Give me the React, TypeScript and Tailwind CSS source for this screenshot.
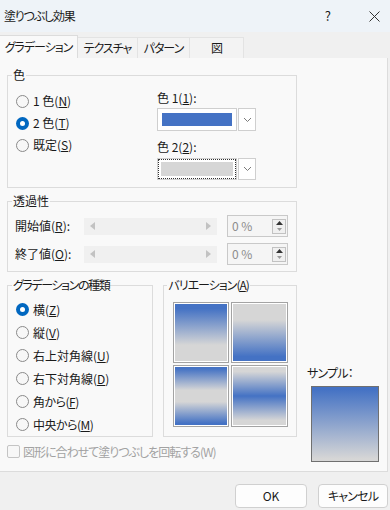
import React from "react";

const U = ({ c }: { c: string }) => <span className="underline">{c}</span>;

function Radio({ checked, label }: { checked?: boolean; label: React.ReactNode }) {
  return (
    <div className="flex h-[22px] items-center gap-[4px]">
      {checked ? (
        <span className="flex h-[13px] w-[13px] items-center justify-center rounded-full bg-[#0067c0]">
          <span className="h-[5px] w-[5px] rounded-full bg-white" />
        </span>
      ) : (
        <span className="h-[13px] w-[13px] rounded-full border border-[#8a8a8a] bg-[#f7f7f7]" />
      )}
      <span className="leading-[16px]">{label}</span>
    </div>
  );
}

function Chevron() {
  return (
    <svg width="9" height="6" viewBox="0 0 9 6">
      <path d="M1 1 L4.5 4.5 L8 1" fill="none" stroke="#7a7a7a" strokeWidth="1" />
    </svg>
  );
}

function Slider({ label }: { label: React.ReactNode }) {
  return (
    <div className="flex h-[28px] items-center">
      <span className="w-[69px] leading-[16px]">{label}</span>
      <div className="flex h-[17px] w-[133px] items-center justify-between bg-[#f0f0f0] px-[6px]">
        <svg width="5" height="8" viewBox="0 0 5 8">
          <path d="M5 0 L0 4 L5 8 Z" fill="#c2c2c2" />
        </svg>
        <svg width="5" height="8" viewBox="0 0 5 8">
          <path d="M0 0 L5 4 L0 8 Z" fill="#c2c2c2" />
        </svg>
      </div>
      <div className="ml-[10px] flex h-[22px] w-[61px] items-center justify-between border border-[#c9c9c9] bg-[#f5f5f5] pl-[4px] pr-[1px]">
        <span className="text-[#8c8c8c] leading-[16px]">0 %</span>
        <div className="flex h-[15px] w-[14px] flex-col border border-[#c2c2c2] bg-[#f0f0f0]">
          <div className="flex flex-1 items-center justify-center">
            <svg width="7" height="4" viewBox="0 0 7 4">
              <path d="M0 4 L3.5 0 L7 4 Z" fill="#333" />
            </svg>
          </div>
          <div className="flex flex-1 items-center justify-center">
            <svg width="5" height="3" viewBox="0 0 5 3">
              <path d="M0 0 L2.5 3 L5 0 Z" fill="#9a9a9a" />
            </svg>
          </div>
        </div>
      </div>
    </div>
  );
}

export default function App() {
  return (
    <div className="h-[510px] w-[390px] overflow-hidden bg-[#f0f0f0] font-['Noto_Sans_CJK_JP',sans-serif] text-[12px] text-[#1a1a1a] [font-feature-settings:'palt']">
      {/* Title bar */}
      <div className="flex h-[32px] items-center bg-[#eef3f8] pl-[4px]">
        <span className="text-[12px] leading-[16px] tracking-[-1.2px]">塗りつぶし効果</span>
        <span className="ml-auto mr-[38px] text-[13px] leading-[16px]">?</span>
        <svg className="mr-[10px]" width="11" height="11" viewBox="0 0 11 11">
          <path d="M0.5 0.5 L10.5 10.5 M10.5 0.5 L0.5 10.5" stroke="#333" strokeWidth="1" />
        </svg>
      </div>

      {/* Tabs */}
      <div className="flex h-[26px] items-end tracking-[-1px]">
        <div className="flex h-[23px] w-[78px] items-center justify-center border-r border-t border-[#dcdcdc] bg-[#f9f9f9]">
          グラデーション
        </div>
        <div className="flex h-[21px] w-[60px] items-center justify-center border-r border-t border-[#e3e3e3] bg-[#f3f3f3]">
          テクスチャ
        </div>
        <div className="flex h-[21px] w-[52px] items-center justify-center border-r border-t border-[#e3e3e3] bg-[#f3f3f3]">
          パターン
        </div>
        <div className="flex h-[21px] w-[54px] items-center justify-center border-r border-t border-[#e3e3e3] bg-[#f3f3f3]">
          図
        </div>
      </div>

      {/* Panel */}
      <div className="h-[414px] w-[388px] border-b border-r border-[#dcdcdc] bg-[#f9f9f9] pl-[7px] pt-[9px]">
        {/* 色 */}
        <fieldset className="w-[290px] border border-[#dcdcdc]">
          <legend className="ml-[4px] px-[1px] leading-[16px]">色</legend>
          <div className="flex h-[104px] pl-[8px] pt-[7px]">
            <div className="w-[141px]">
              <Radio label={<>1 色(<U c="N" />)</>} />
              <Radio checked label={<>2 色(<U c="T" />)</>} />
              <Radio label={<>既定(<U c="S" />)</>} />
            </div>
            <div className="flex flex-col">
              <span className="leading-[16px]">
                色 1(<U c="1" />):
              </span>
              <div className="mt-[2px] flex h-[23px] w-[99px]">
                <div className="flex-1 border border-[#cfcfcf] bg-white p-[4px]">
                  <div className="h-full w-full bg-[#4472c4]" />
                </div>
                <div className="ml-[1px] flex w-[18px] items-center justify-center border border-[#cfcfcf] bg-white">
                  <Chevron />
                </div>
              </div>
              <span className="mt-[8px] leading-[16px]">
                色 2(<U c="2" />):
              </span>
              <div className="mt-[3px] flex h-[22px] w-[99px]">
                <div className="flex-1 border border-[#cfcfcf] bg-white">
                  <div className="h-full w-full border border-dotted border-[#333] p-[2px]">
                    <div className="h-full w-full bg-[#d6d6d6]" />
                  </div>
                </div>
                <div className="ml-[1px] flex w-[18px] items-center justify-center border border-[#cfcfcf] bg-white">
                  <Chevron />
                </div>
              </div>
            </div>
          </div>
        </fieldset>

        {/* 透過性 */}
        <fieldset className="mt-[5px] w-[290px] border border-[#dcdcdc]">
          <legend className="ml-[4px] px-[1px] leading-[16px]">透過性</legend>
          <div className="h-[62px] pl-[7px] pt-[3px]">
            <Slider label={<>開始値(<U c="R" />):</>} />
            <Slider label={<>終了値(<U c="O" />):</>} />
          </div>
        </fieldset>

        <div className="mt-[5px] flex">
          <div className="w-[290px]">
            <div className="flex gap-[10px]">
              {/* 種類 */}
              <fieldset className="w-[147px] border border-[#dcdcdc]">
                <legend className="ml-[4px] px-[1px] leading-[16px] tracking-[-1.4px]">グラデーションの種類</legend>
                <div className="h-[143px] pl-[8px] pt-[5px]">
                  <div className="[&>div]:h-[23px]">
                    <Radio checked label={<>横(<U c="Z" />)</>} />
                    <Radio label={<>縦(<U c="V" />)</>} />
                    <Radio label={<>右上対角線(<U c="U" />)</>} />
                    <Radio label={<>右下対角線(<U c="D" />)</>} />
                    <Radio label={<span className="tracking-[-0.5px]">角から(<U c="F" />)</span>} />
                    <Radio label={<span className="tracking-[-0.5px]">中央から(<U c="M" />)</span>} />
                  </div>
                </div>
              </fieldset>
              {/* バリエーション */}
              <fieldset className="w-[134px] border border-[#dcdcdc]">
                <legend className="ml-[3px] px-[1px] leading-[16px] tracking-[-1px]">
                  バリエーション(<U c="A" />)
                </legend>
                <div className="h-[143px] pl-[9px] pt-[9px]">
                  <div className="grid grid-cols-[56px_57px] grid-rows-[61px_62px] gap-[2px]">
                    <div className="border border-[#a3a3a3] bg-white p-[1px]">
                      <div className="h-full w-full bg-[linear-gradient(#4472c4_8%,#d6d6d6_72%)]" />
                    </div>
                    <div className="border border-[#a3a3a3] bg-white p-[1px]">
                      <div className="h-full w-full bg-[linear-gradient(#d6d6d6_28%,#4472c4_92%)]" />
                    </div>
                    <div className="border border-[#a3a3a3] bg-white p-[1px]">
                      <div className="h-full w-full bg-[linear-gradient(#4472c4_3%,#d6d6d6_40%,#d6d6d6_60%,#4472c4_97%)]" />
                    </div>
                    <div className="border border-[#a3a3a3] bg-white p-[1px]">
                      <div className="h-full w-full bg-[linear-gradient(#d6d6d6_8%,#4472c4_50%,#d6d6d6_92%)]" />
                    </div>
                  </div>
                </div>
              </fieldset>
            </div>
            {/* checkbox */}
            <div className="mt-[8px] flex h-[13px] items-center gap-[3px]">
              <span className="h-[13px] w-[13px] rounded-[2px] border border-[#c4c4c4] bg-[#f7f7f7]" />
              <span className="text-[#a2a2a2] leading-[16px] tracking-[-1px]">図形に合わせて塗りつぶしを回転する(W)</span>
            </div>
          </div>
          {/* sample */}
          <div className="pl-[10px] pt-[88px]">
            <div className="leading-[16px] tracking-[-0.8px]">サンプル：</div>
            <div className="ml-[4px] mt-[5px] h-[76px] w-[68px] border border-[#707070] bg-[linear-gradient(#4472c4_3%,#d6d6d6_97%)]" />
          </div>
        </div>
      </div>

      {/* Buttons */}
      <div className="flex justify-end gap-[11px] pr-[2px] pt-[12px]">
        <div className="flex h-[24px] w-[72px] items-center justify-center rounded-[4px] border border-[#d0d0d0] bg-[#fdfdfd]">
          OK
        </div>
        <div className="flex h-[24px] w-[70px] items-center justify-center rounded-[4px] border border-[#d0d0d0] bg-[#fdfdfd] tracking-[-0.8px]">
          キャンセル
        </div>
      </div>
    </div>
  );
}
